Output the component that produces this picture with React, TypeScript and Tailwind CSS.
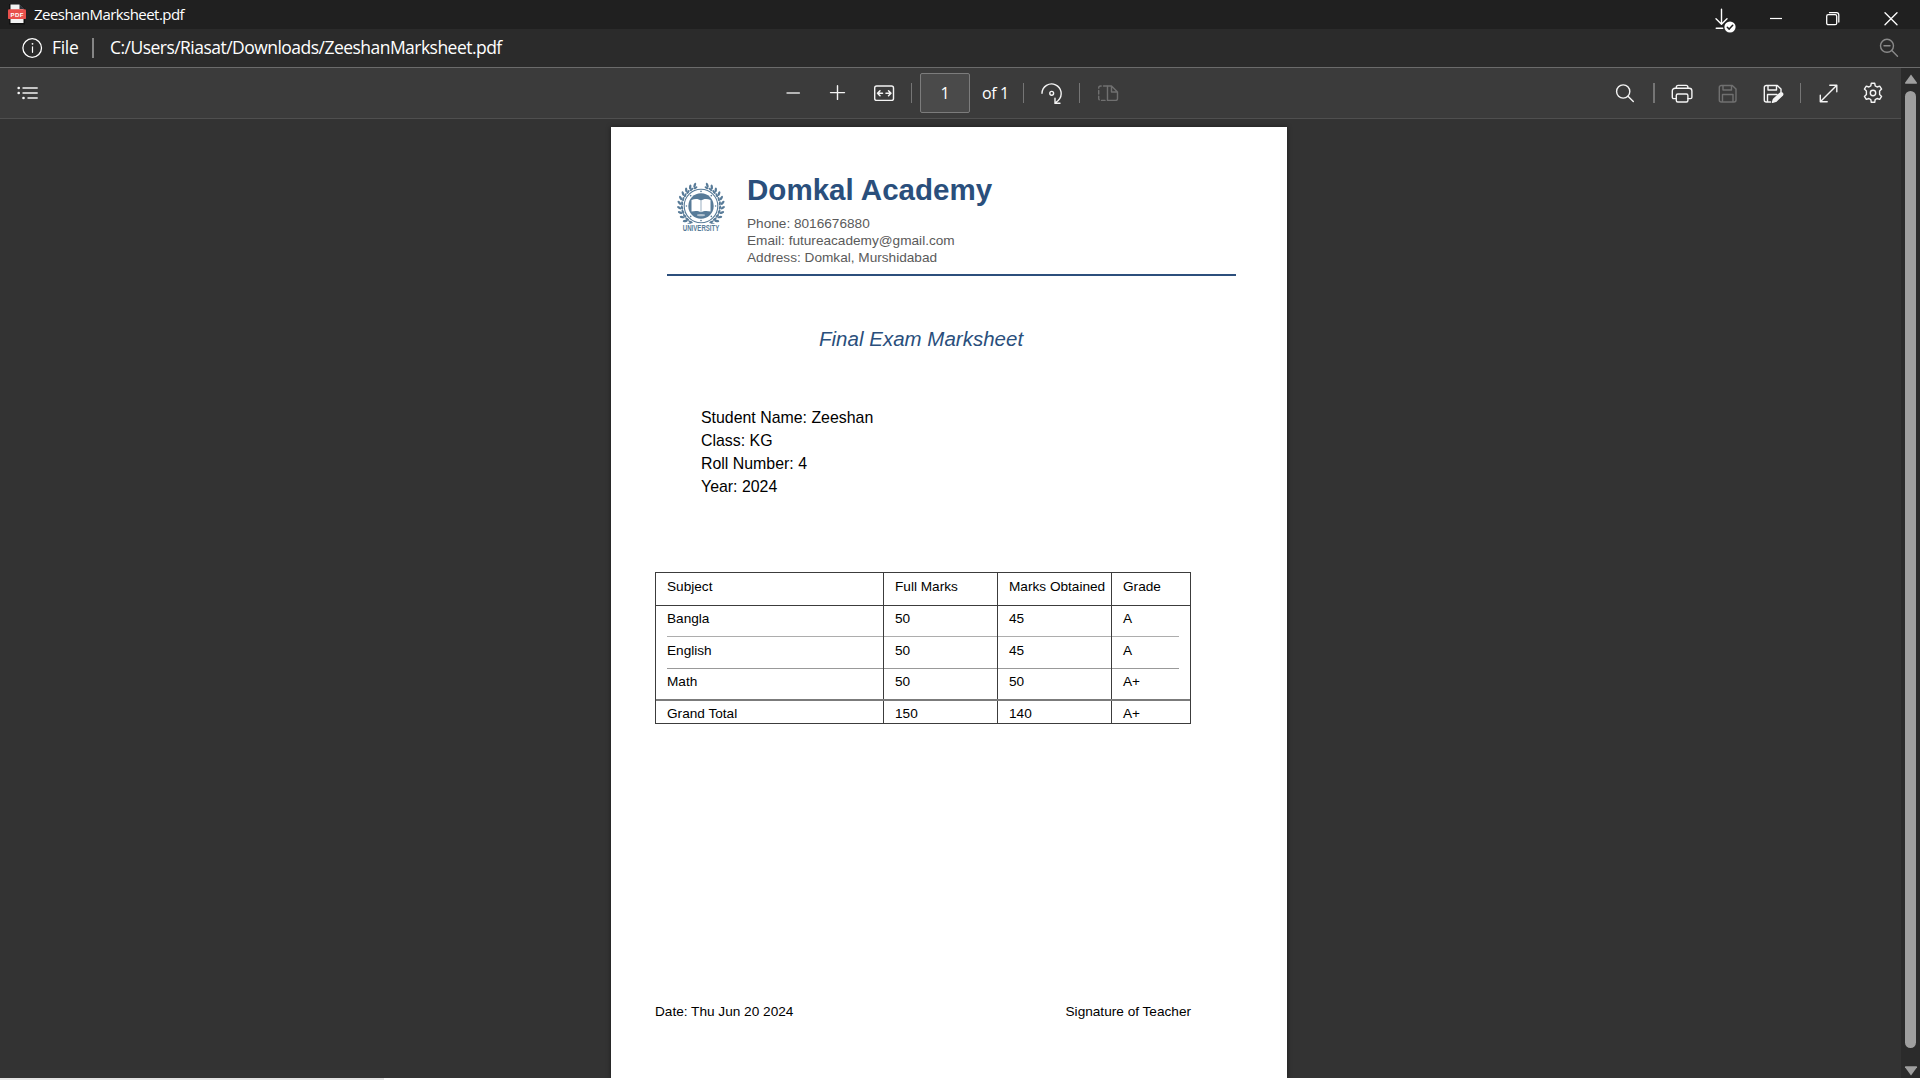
import type { ReactNode } from "react";

function Icon({ children, className = "", w = 24, h = 24 }: { children: ReactNode; className?: string; w?: number; h?: number }) {
  return (
    <svg
      width={w}
      height={h}
      viewBox={`0 0 ${w} ${h}`}
      fill="none"
      stroke="currentColor"
      strokeWidth="1.4"
      strokeLinecap="round"
      strokeLinejoin="round"
      className={`shrink-0 ${className}`}
    >
      {children}
    </svg>
  );
}

function Separator({ className = "" }: { className?: string }) {
  return <div className={`h-5 w-px shrink-0 bg-[#757575] ${className}`} />;
}

function TitleBar() {
  return (
    <header className="relative z-10 flex h-[29px] shrink-0 items-start bg-[#202020] text-white">
      <Icon w={20} h={22} className="ml-[7px] mt-[3px]">
        <path d="M2 1h11l5 5v15.500H2z" fill="#111" stroke="none" />
        <path d="M3.500 1.500h9l4 4V20h-13z" fill="#f3f3f3" stroke="none" />
        <path d="M12.500 1l5 5h-5z" fill="#30343a" stroke="none" />
        <rect x="1" y="6.300" width="18" height="9.800" rx="1.200" fill="#e8504c" stroke="none" />
        <text x="3.500" y="13.500" fill="#fff" stroke="none" fontSize="6" fontWeight="700" fontFamily="Liberation Sans, sans-serif" textLength="13" lengthAdjust="spacing">PDF</text>
      </Icon>
      <span className="ml-[7px] mt-[4px] text-[15px] leading-[20px] tracking-[-0.550px]">ZeeshanMarksheet.pdf</span>
      <Icon className="ml-auto mr-[31px] mt-[8px] overflow-visible" w={24} h={24}>
        <path d="M7.500 1.200v14.800M2 10.800l5.500 5.400 5.500-5.400M2.200 20.300h6.500" />
        <circle cx="16" cy="19" r="5.600" fill="#fff" stroke="none" />
        <path d="M13.300 19.200l1.900 1.900 3.500-3.900" stroke="#202020" strokeWidth="1.500" />
      </Icon>
      <Icon w={14} h={14} className="mr-[43px] mt-[12px]">
        <path d="M1 6.500h12" strokeWidth="1.200" strokeLinecap="butt" />
      </Icon>
      <Icon w={14} h={14} className="mr-[44px] mt-[12px]">
        <rect x=".7" y="2.700" width="10" height="10" rx="1.500" strokeWidth="1.300" />
        <path d="M3.500 .7h7a2.300 2.300 0 0 1 2.300 2.300v7" strokeWidth="1.300" />
      </Icon>
      <Icon w={14} h={14} className="mr-[22px] mt-[12px]">
        <path d="M1 .7l12 12M13 .7l-12 12" strokeWidth="1.300" />
      </Icon>
    </header>
  );
}

function AddressBar() {
  return (
    <div className="flex h-[38px] shrink-0 items-center bg-[#2b2b2b] text-[17.500px] leading-6 text-white">
      <Icon w={22} h={22} className="ml-[21px]">
        <circle cx="11.200" cy="11" r="9.300" strokeWidth="1.300" />
        <path d="M11.500 9.800v5.500" strokeWidth="1.200" />
        <circle cx="11.500" cy="6.800" r=".9" fill="currentColor" stroke="none" />
      </Icon>
      <span className="ml-[9px] w-[40px] whitespace-nowrap pb-[2px] tracking-[-0.300px]">File</span>
      <div className="h-5 w-[2px] bg-[#858585]" />
      <span className="ml-[16px] whitespace-nowrap pb-[2px] tracking-[-0.530px]">C:/Users/Riasat/Downloads/ZeeshanMarksheet.pdf</span>
      <Icon w={20} h={20} className="ml-auto mr-[21px] text-[#8a8a8a]">
        <circle cx="8" cy="7.800" r="6.500" />
        <path d="M12.800 12.600l5.700 5.700M5 7.800h6" />
      </Icon>
    </div>
  );
}

const GEAR =
  "M10.300 2.200h3.400l.5 2.700 1.900 1.100 2.600-.9 1.900 3-2 1.900v3.500l2 1.900-1.900 3-2.600-.9-1.900 1.100-.5 2.700h-3.400l-.5-2.700-1.900-1.100-2.600.9-1.900-3 2-1.900V10l-2-1.900 1.900-3 2.600.9 1.900-1.100z";

function PdfToolbar() {
  return (
    <div className="flex h-[51px] shrink-0 items-center border-b border-[#4f4f4f] bg-[#3b3b3b] text-[#f4f4f4]">
      <Icon className="ml-4">
        <path d="M6.500 7h15.200M6.500 12h15.200M11.500 17h10.200" strokeLinecap="butt" strokeWidth="1.600" />
        <g fill="currentColor" stroke="none">
          <circle cx="2.700" cy="7" r="1.300" />
          <circle cx="2.700" cy="12" r="1.300" />
          <circle cx="7.500" cy="17" r="1.300" />
        </g>
      </Icon>
      <Icon className="ml-[741px] text-[#b5b5b5]">
        <path d="M6.200 12h12" strokeWidth="1.800" />
      </Icon>
      <Icon className="ml-[21px]">
        <path d="M4.500 11.600h14M11.500 4.800v13.600" />
      </Icon>
      <Icon className="ml-[22px]">
        <rect x="2.700" y="5" width="18.800" height="14.400" rx="2" />
        <path d="M5.500 12.300h5M8 9.800l-2.500 2.500L8 14.800M19 12.300h-5M16.500 9.800l2.500 2.500-2.500 2.500" strokeWidth="1.500" />
      </Icon>
      <Separator className="ml-[15px]" />
      <div className="ml-2 flex h-10 w-[50px] shrink-0 items-center justify-center rounded-[2px] border border-[#7c7c7c] bg-[#4a4a4a] text-[16px] text-white">1</div>
      <span className="ml-3 w-[41px] whitespace-nowrap text-[16px] tracking-[-0.400px] text-white">of 1</span>
      <Separator />
      <Icon className="ml-4">
        <path d="M2 12.200a9.600 9.600 0 1 1 16.200 7.300l-3.300 2.800M15 17.300v5h5" />
        <circle cx="11.700" cy="12.300" r="1.900" />
      </Icon>
      <Separator className="ml-[15px]" />
      <Icon className="ml-4 text-[#707070]">
        <path d="M11.500 5v14.400h8a2 2 0 0 0 2-2V11l-6-6zM15.500 5v6h6" />
        <path d="M11 5H4.700a2 2 0 0 0-2 2v10.400a2 2 0 0 0 2 2H11" strokeDasharray="3.500 2.300" />
      </Icon>

      <Icon className="ml-auto mr-[15px]">
        <circle cx="9.200" cy="10.500" r="6.600" />
        <path d="M14 15.300l5.300 5.300" />
      </Icon>
      <div className="mr-[15px] h-5 w-[2px] shrink-0 bg-[#757575]" />
      <Icon className="mr-[22px]">
        <path d="M6.300 7.300V6.200A1.800 1.800 0 0 1 8.100 4.400h8a1.800 1.800 0 0 1 1.800 1.800v1.100M6.300 17.600H3.700a1.400 1.400 0 0 1-1.400-1.400V10a2.700 2.700 0 0 1 2.700-2.700h14.200A2.700 2.700 0 0 1 21.900 10v6.200a1.400 1.400 0 0 1-1.400 1.400h-2.600" />
        <rect x="6.300" y="13" width="11.600" height="8" rx="1.500" />
      </Icon>
      <Icon className="mr-[21px] text-[#707070]">
        <path d="M5.300 4.500h11l3.700 3.500v11a2 2 0 0 1-2 2H5.300a2 2 0 0 1-2-2V6.500a2 2 0 0 1 2-2zM7 4.500v4.500h8.500V4.500M6.500 21v-7.500H17V21" />
      </Icon>
      <Icon className="mr-[15px]">
        <path d="M9.500 21H5.300a2 2 0 0 1-2-2V6.500a2 2 0 0 1 2-2h11l3.700 3.500v3M7 4.500v4.500h8.500V4.500M6.500 21v-7.500h9.500" />
        <path d="M11.500 21.300l1-3 6.500-6a1.400 1.400 0 0 1 2.300 1.900l-6.500 6.200z" fill="currentColor" />
      </Icon>
      <Separator className="mr-[15px]" />
      <Icon className="mr-[21px]">
        <path d="M4.300 20.700L20.800 4.300M13.800 4.300h7v6.500M4.300 14.200v6.500h6.900" />
      </Icon>
      <Icon className="mr-[16px]">
        <path d={GEAR} />
        <circle cx="12" cy="12" r="2.700" />
      </Icon>
    </div>
  );
}

const LEAVES = Array.from({ length: 11 }, (_, i) => 14 + i * 13);

function Crest() {
  return (
    <svg width="50" height="52" viewBox="0 0 50 52" className="shrink-0 overflow-visible" fill="#587b98">
      {[1, -1].map((side) => (
        <g key={side} transform={`translate(25 25) scale(${side} 1)`}>
          {LEAVES.map((a) => (
            <g key={a} transform={`rotate(${a})`}>
              <ellipse cx="1" cy="-21.800" rx="1.200" ry="2.500" transform="rotate(-35 1 -21.800)" />
              <ellipse cx="1" cy="-19" rx="1.100" ry="2.200" transform="rotate(-75 1 -19)" />
            </g>
          ))}
        </g>
      ))}
      <circle cx="25" cy="25" r="17.600" fill="#fff" />
      <circle cx="25" cy="25" r="16.800" fill="none" stroke="#587b98" strokeWidth="1.100" />
      {[0, 45, 90, 135, 180, 225, 270, 315].map((a) => (
        <circle key={a} cx="25" cy="10.400" r=".8" transform={`rotate(${a} 25 25)`} />
      ))}
      <circle cx="25" cy="25" r="12.700" />
      <path d="M15.500 19c3.500-1.500 7-1.300 9.500.6 2.500-1.900 6-2.100 9.500-.6v11.500c-3.500-1-7-.8-9.500.8-2.500-1.600-6-1.800-9.500-.8z" fill="#fff" />
      <path d="M24.700 19.600h.6v11.500h-.6z" />
      <ellipse cx="25" cy="34.200" rx="4" ry="1.100" fill="#b3c3d0" />
      <path d="M6 42.800h38V52H6z" fill="#fff" />
      <text x="6.800" y="50" fontSize="9.300" fontWeight="700" fontFamily="Liberation Sans, sans-serif" textLength="36.500" lengthAdjust="spacingAndGlyphs">
        UNIVERSITY
      </text>
    </svg>
  );
}

const ROWS = [
  { cells: ["Subject", "Full Marks", "Marks Obtained", "Grade"], row: "h-[33px] border-b border-[#3c3c3c]", line: "" },
  { cells: ["Bangla", "50", "45", "A"], row: "h-[31px]", line: "border-b border-[#adadad]" },
  { cells: ["English", "50", "45", "A"], row: "h-[32px]", line: "border-b border-[#999]" },
  { cells: ["Math", "50", "50", "A+"], row: "h-[32px] border-b-2 border-[#7b7b7b]", line: "" },
  { cells: ["Grand Total", "150", "140", "A+"], row: "h-[22px]", line: "" },
];
const PAD = ["pt-[6px]", "pt-[5px]", "pt-[6px]", "pt-[5px]", "pt-[5px]"];
const COLS = ["w-[228px]", "w-[114px]", "w-[114px]", "w-[78px]"];

function MarksTable() {
  return (
    <div className="ml-[44px] mt-[74px] w-[536px] border border-[#3c3c3c] text-[13.640px] leading-[16px]">
      {ROWS.map((r, i) => (
        <div key={i} className={`flex ${r.row}`}>
          {r.cells.map((c, j) => (
            <div key={j} className={`flex shrink-0 ${COLS[j]} ${j < 3 ? "border-r border-[#3c3c3c]" : ""} ${j === 0 ? "pl-[11px]" : ""} ${j === 3 ? "pr-[11px]" : ""}`}>
              <div className={`flex-1 whitespace-nowrap ${PAD[i]} ${r.line} ${j > 0 ? "pl-[11px]" : ""}`}>{c}</div>
            </div>
          ))}
        </div>
      ))}
    </div>
  );
}

function DocumentPage() {
  return (
    <article className="ml-[611px] mt-2 h-[951px] w-[676px] shrink-0 overflow-hidden bg-white font-['Liberation_Sans',Arial,sans-serif] text-black shadow-[0_0_5px_rgba(0,0,0,0.45)]">
      <div className="flex pl-[65px] pt-[46px]">
        <div className="mt-[8px]">
          <Crest />
        </div>
        <div className="ml-[21px] whitespace-nowrap">
          <h1 className="text-[29.550px] font-bold leading-[34px] text-[#2a4f7c]">Domkal Academy</h1>
          <div className="mt-[8px] text-[13.640px] leading-[17px] text-[#5a5a5a]">
            <p>Phone: 8016676880</p>
            <p>Email: futureacademy@gmail.com</p>
            <p>Address: Domkal, Murshidabad</p>
          </div>
        </div>
      </div>
      <div className="ml-[56px] mt-[8px] h-[2px] w-[569px] bg-[#2c4f7c]" />
      <h2 className="ml-[208px] mt-[51px] text-[20.450px] italic leading-[24px] tracking-[0.040px] text-[#2a4f7c]">Final Exam Marksheet</h2>
      <div className="ml-[90px] mt-[55px] text-[15.900px] leading-[23px]">
        <p>Student Name: Zeeshan</p>
        <p>Class: KG</p>
        <p>Roll Number: 4</p>
        <p>Year: 2024</p>
      </div>
      <MarksTable />
      <div className="ml-[44px] mt-[280px] flex w-[536px] justify-between text-[13.640px] leading-[16px]">
        <span>Date: Thu Jun 20 2024</span>
        <span>Signature of Teacher</span>
      </div>
    </article>
  );
}

function Scrollbar() {
  return (
    <div className="flex w-[19px] shrink-0 flex-col items-center bg-[#2b2b2b] text-[#9f9f9f]">
      <svg width="14" height="10" viewBox="0 0 14 10" className="mt-[6px]">
        <path d="M7 .5L13 8.800q.3 1-.8 1H1.800q-1.100 0-.8-1z" fill="currentColor" />
      </svg>
      <div className="mt-[7px] h-[957px] w-[11px] rounded-full bg-[#9f9f9f]" />
      <svg width="14" height="10" viewBox="0 0 14 10" className="mt-[18px]">
        <path d="M7 9.500L13 1.200q.3-1-.8-1H1.800q-1.100 0-.8 1z" fill="currentColor" />
      </svg>
    </div>
  );
}

export default function App() {
  return (
    <div className="flex h-[1080px] w-[1920px] flex-col overflow-hidden bg-white font-['Open_Sans',sans-serif]">
      <TitleBar />
      <AddressBar />
      <div className="h-px shrink-0 bg-[#6b6b6b]" />
      <main className="flex h-[1010px] shrink-0">
        <div className="flex w-[1901px] flex-col overflow-hidden bg-[#333]">
          <PdfToolbar />
          <DocumentPage />
        </div>
        <Scrollbar />
      </main>
      <div className="h-[2px] w-[384px] shrink-0 bg-[#e6e6e6]" />
    </div>
  );
}
